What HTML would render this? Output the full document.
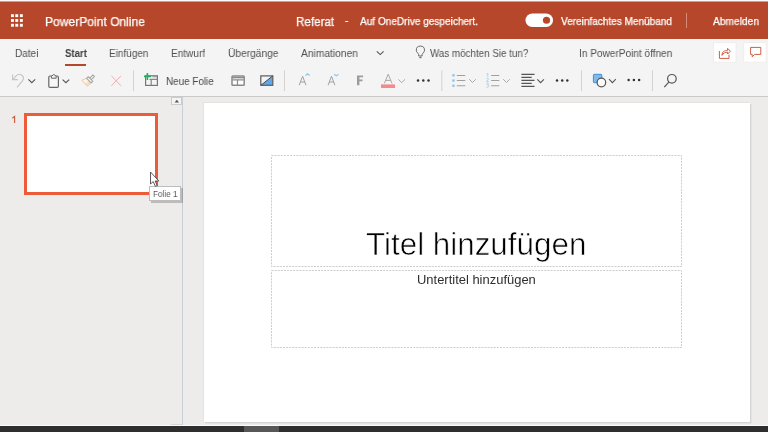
<!DOCTYPE html>
<html><head><meta charset="utf-8">
<style>
*{margin:0;padding:0;box-sizing:border-box}
html,body{width:768px;height:432px;overflow:hidden;background:#eeecea;font-family:"Liberation Sans",sans-serif}
.abs{position:absolute}
#topline{left:0;top:0;width:768px;height:1px;background:#fdfbfa;box-shadow:0 1px 0 #d8988a}
#hdr{left:0;top:2px;width:768px;height:37px;background:#b7472a}
#ribbon{left:0;top:39px;width:768px;height:57px;background:#f4f4f4}
#ribline{left:0;top:96px;width:768px;height:1px;background:#c9c9c9}
.t{position:absolute;white-space:nowrap;line-height:1;transform-origin:0 0;will-change:transform}
.w{color:#fff;-webkit-text-stroke:0.25px #fff}
.tab{color:#505050;font-size:10.5px;top:47.8px}
#left{left:0;top:97px;width:182px;height:328px;background:#eeecea}
#divider{left:182px;top:97px;width:1px;height:328px;background:#c8ced5}
#main{left:183px;top:97px;width:585px;height:328px;background:#eeecea}
#slide{left:204px;top:103px;width:546px;height:319px;background:#fff;box-shadow:1px 1px 0 #d4d4d4, 2px 2px 0 #e5e4e2, -1px -1px 0 #e4e3e1}
#whiteline{left:0;top:425px;width:768px;height:1px;background:#fafafa}
#taskbar{left:0;top:426px;width:768px;height:6px;background:#2e2e2e}
svg{position:absolute;overflow:visible}
.sep{position:absolute;width:1px;background:#d6d4d2}
.ph{position:absolute;border:1px dashed #c4c4c4}
</style></head><body>
<div id="topline" class="abs"></div>
<div id="hdr" class="abs"></div>
<!-- waffle -->
<svg style="left:0;top:0" width="768" height="40">
  <g fill="#fff"><rect x="11" y="14.2" width="2.9" height="2.9"/><rect x="15.3" y="14.2" width="2.9" height="2.9"/><rect x="19.9" y="14.2" width="2.9" height="2.9"/><rect x="11" y="19.0" width="2.9" height="2.9"/><rect x="15.3" y="19.0" width="2.9" height="2.9"/><rect x="19.9" y="19.0" width="2.9" height="2.9"/><rect x="11" y="23.8" width="2.9" height="2.9"/><rect x="15.3" y="23.8" width="2.9" height="2.9"/><rect x="19.9" y="23.8" width="2.9" height="2.9"/></g>
  <rect x="525.5" y="13.5" width="27.5" height="13.5" rx="6.75" fill="#fff"/>
  <circle cx="546.5" cy="20.25" r="3.6" fill="#b7472a"/>
  <rect x="686" y="13" width="1" height="15" fill="#d68a77"/>
</svg>
<div class="t w" style="left:45px;top:15.6px;font-size:12.5px;transform:scaleX(.966)">PowerPoint Online</div>
<div class="t w" style="left:296.3px;top:15.6px;font-size:12.5px;transform:scaleX(.93)">Referat</div>
<div class="t w" style="left:345.3px;top:14.8px;font-size:10.5px">-</div>
<div class="t w" style="left:359.5px;top:15.5px;font-size:10.5px;transform:scaleX(.958)">Auf OneDrive gespeichert.</div>
<div class="t w" style="left:561px;top:15.6px;font-size:10.5px;transform:scaleX(.955)">Vereinfachtes Menüband</div>
<div class="t w" style="left:713px;top:16px;font-size:10.5px;transform:scaleX(.973)">Abmelden</div>

<div id="ribbon" class="abs"></div>
<div class="t tab" style="left:14.5px;transform:scaleX(.955)">Datei</div>
<div class="t tab" style="left:64.6px;font-weight:bold;color:#3c3c3c;transform:scaleX(.915)">Start</div>
<div class="abs" style="left:64.5px;top:64px;width:21.5px;height:2px;background:#b7472a"></div>
<div class="t tab" style="left:108.5px;transform:scaleX(.953)">Einfügen</div>
<div class="t tab" style="left:171.2px;transform:scaleX(.958)">Entwurf</div>
<div class="t tab" style="left:227.6px;transform:scaleX(.972)">Übergänge</div>
<div class="t tab" style="left:300.6px;transform:scaleX(.975)">Animationen</div>
<div class="t tab" style="left:429.8px;transform:scaleX(.934)">Was möchten Sie tun?</div>
<div class="t tab" style="left:579px;transform:scaleX(.959)">In PowerPoint öffnen</div>
<div class="t tab" style="left:166px;top:76.2px;color:#484848;transform:scaleX(.94)">Neue Folie</div>

<svg style="left:0;top:0" width="768" height="432" viewBox="0 0 768 432">
 <g fill="none" stroke-linecap="butt" stroke-linejoin="miter">
  <!-- tab chevron -->
  <path d="M376.8 51.3 L380.2 54.6 L383.6 51.3" stroke="#555" stroke-width="1.1"/>
  <!-- bulb -->
  <path d="M418.7 56 V54.6 C418.7 53.4 416.3 52.6 416.3 50.2 A4.1 4.1 0 0 1 424.5 50.2 C424.5 52.6 422.1 53.4 422.1 54.6 V56 Z" stroke="#666" stroke-width="1"/>
  <path d="M419.4 57.6 H421.4" stroke="#666" stroke-width="1.2"/>
  <!-- undo -->
  <path d="M12.6 74.4 V79.6 H17.8" stroke="#c4c4c4" stroke-width="1.1"/>
  <path d="M13 79.3 L16.4 75.6 A4 4 0 0 1 22.6 80.6 L17 87.4" stroke="#c4c4c4" stroke-width="1.1"/>
  <path d="M28.4 79.4 L31.8 82.7 L35.2 79.4" stroke="#555" stroke-width="1.1"/>
  <!-- clipboard -->
  <rect x="48.8" y="76" width="9.6" height="11.4" rx="1.2" stroke="#666" stroke-width="1.2" fill="#f7f7f7"/>
  <path d="M51.4 78.2 V76.4 L53.8 74.4 L56.2 76.4 V78.2 Z" stroke="#666" stroke-width="1" fill="#f3f3f3"/>
  <path d="M62.6 79.6 L65.9 82.7 L69.2 79.6" stroke="#555" stroke-width="1.1"/>
  <!-- format painter -->
  <g transform="translate(89.4 80) rotate(-45)">
   <path d="M-1 -3.3 L-5.4 -5.2 L-6 2.8 L-1.3 3.4 Z" fill="#fdf3e6" stroke="#f3c394" stroke-width="0.9"/>
   <path d="M-5.2 0 L-1.3 0 L-1.3 3.4 L-6 2.8 Z" fill="#f9dcb6"/>
   <path d="M-0.8 -3.2 H1.6 V3.2 H-0.8 Z M1.6 -1.1 H6 V1.1 H1.6" fill="#f2f2f2" stroke="#a2a2a2" stroke-width="1"/>
  </g>
  <!-- delete X -->
  <path d="M111.4 75.8 L121 85.8 M121 75.8 L111.4 85.8" stroke="#f0aab2" stroke-width="1"/>
  <!-- new slide -->
  <rect x="145.6" y="75.8" width="11.8" height="9.6" stroke="#777" stroke-width="1.2" fill="#f4f4f4"/>
  <path d="M149.5 79.3 H157 M151.2 79.3 V85" stroke="#888" stroke-width="1.2"/>
  <path d="M152.5 76.7 H157" stroke="#999" stroke-width="1.2"/>
  <path d="M144 76.4 H151 M147.4 73 V80" stroke="#2bab62" stroke-width="1.6"/>
  <!-- layout -->
  <rect x="232" y="76" width="12.2" height="9.2" rx="0.8" stroke="#8a8a8a" stroke-width="1.5" fill="#fff"/>
  <path d="M232 77.6 H244.2" stroke="#8a8a8a" stroke-width="1.5"/>
  <path d="M232.5 79.8 H243.7 M237.5 79.8 V85" stroke="#8a8a8a" stroke-width="1.2"/>
  <!-- design -->
  <path d="M272.6 76 V85.2 H261.2 Z" fill="#62a8e8"/>
  <rect x="260.8" y="75.9" width="12" height="9.4" stroke="#5a5a5a" stroke-width="1.2"/>
  <path d="M261 85.2 L272.6 76" stroke="#444" stroke-width="1"/>
  <!-- grow font -->
  <path d="M299.2 85.2 L302.6 76.2 L306 85.2 M300.4 82 H304.8" stroke="#a0a0a0" stroke-width="1"/>
  <path d="M305.4 75.6 L307.6 73.8 L309.8 75.6" stroke="#8cc4ec" stroke-width="1.1"/>
  <!-- shrink font -->
  <path d="M328.1 85.2 L331.5 76.2 L334.9 85.2 M329.3 82 H333.7" stroke="#a0a0a0" stroke-width="1"/>
  <path d="M334.2 74.2 L336.3 75.9 L338.4 74.2" stroke="#8cc4ec" stroke-width="1.1"/>
  <!-- font color -->
  <path d="M384.4 83.4 L388.2 74.2 L392 83.4 M385.6 80.4 H390.8" stroke="#a8a8a8" stroke-width="1"/>
  <rect x="381" y="84.4" width="14" height="3.6" fill="#f48a8e"/>
  <path d="M398.4 79.4 L401.7 82.6 L405 79.4" stroke="#aaa" stroke-width="1"/>
  <!-- bullets -->
  <path d="M456.8 75.4 H465.3 M456.8 80.5 H465.3 M456.8 85.7 H465.3" stroke="#a0a0a0" stroke-width="1.05"/>
  <path d="M469.2 79.2 L472.5 82.5 L475.8 79.2" stroke="#aaa" stroke-width="1"/>
  <path d="M491.1 75.4 H499.3 M491.1 80.5 H499.3 M491.1 85.7 H499.3" stroke="#a0a0a0" stroke-width="1.05"/>
  <path d="M503.2 79.2 L506.5 82.5 L509.8 79.2" stroke="#aaa" stroke-width="1"/>
  <path d="M486.6 74.1 L487.8 73.4 V76.7 M486.4 78.6 Q487.3 77.8 488.2 78.3 Q488.8 79.2 486.4 81.7 H488.9 M486.4 83.7 H488.6 L487.4 85.2 Q489.1 85.3 488.7 86.6 Q488 87.7 486.3 87.2" stroke="#92c6ee" stroke-width="0.7"/>
  <!-- align -->
  <path d="M521.4 74.4 H534.5 M521.4 77.4 H531.7 M521.4 80.4 H534.5 M521.4 83.4 H531.7 M521.4 86.4 H534.5" stroke="#555" stroke-width="1.1"/>
  <path d="M537.3 79.3 L540.6 82.6 L543.9 79.3" stroke="#555" stroke-width="1.1"/>
  <!-- shapes -->
  <rect x="593.4" y="74.3" width="8.4" height="8.4" rx="0.8" fill="#82baea" stroke="#3d8fdb" stroke-width="1"/>
  <circle cx="601.4" cy="82.5" r="4.3" fill="#fafafa" stroke="#555" stroke-width="1.2"/>
  <path d="M609 79.2 L612.4 82.6 L615.8 79.2" stroke="#555" stroke-width="1.1"/>
  <!-- search -->
  <circle cx="671.9" cy="78.8" r="4.3" stroke="#555" stroke-width="1.2"/>
  <path d="M668.8 82.2 L664.3 87.2" stroke="#555" stroke-width="1.2"/>
 </g>
 <g>
  <rect x="452.3" y="74.2" width="2.3" height="2.3" fill="#8cc2ec"/>
  <rect x="452.3" y="79.4" width="2.3" height="2.3" fill="#8cc2ec"/>
  <rect x="452.3" y="84.6" width="2.3" height="2.3" fill="#8cc2ec"/>
  <circle cx="418" cy="80.6" r="1.25" fill="#333"/><circle cx="423.3" cy="80.6" r="1.25" fill="#333"/><circle cx="428.5" cy="80.6" r="1.25" fill="#333"/>
  <circle cx="557" cy="80.4" r="1.25" fill="#333"/><circle cx="562.2" cy="80.4" r="1.25" fill="#333"/><circle cx="567.3" cy="80.4" r="1.25" fill="#333"/>
  <circle cx="628.6" cy="80" r="1.25" fill="#333"/><circle cx="633.9" cy="80" r="1.25" fill="#333"/><circle cx="639.1" cy="80" r="1.25" fill="#333"/>
  <rect x="133" y="70.5" width="1" height="20.5" fill="#d4d2d0"/>
  <rect x="284" y="70.5" width="1" height="20.5" fill="#d4d2d0"/>
  <rect x="441.3" y="70.5" width="1" height="20.5" fill="#d4d2d0"/>
  <rect x="581" y="70.5" width="1" height="20.5" fill="#d4d2d0"/>
  <rect x="652" y="70.5" width="1" height="20.5" fill="#d4d2d0"/>
 </g>
 <path d="M357 75.4 H363.1 V77.3 H359.4 V79.5 H362.5 V81.3 H359.4 V85.2 H357 Z" fill="#9c9c9c"/>
 <!-- share / comment buttons -->
 <rect x="713.5" y="42.7" width="22.5" height="19.5" fill="#fff" stroke="#eeecea" stroke-width="0.8"/>
 <rect x="743.7" y="42.7" width="22.5" height="19.5" fill="#fff" stroke="#eeecea" stroke-width="0.8"/>
 <g fill="none" stroke="#cc5f45" stroke-width="1">
  <path d="M719.4 51 V58.4 H729 V54.6"/>
  <path d="M722 55.4 C722 51.6 724.4 50.4 727.6 50.4 V48.4 L730.4 51.2 L727.6 54 V52.2 C725 52.2 723.2 53.2 722 55.4 Z"/>
  <path d="M750.6 47.4 H760.8 V54.4 H754.6 L752.2 56.8 V54.4 H750.6 Z"/>
 </g>
</svg>
<div id="ribline" class="abs"></div>
<div id="left" class="abs"></div>
<div id="divider" class="abs"></div>
<div class="abs" style="left:171px;top:97px;width:11px;height:8px;background:#f4f4f4;border:1px solid #c9ccd0"></div>
<svg style="left:0;top:0" width="768" height="432"><path d="M174.6 102.4 L176.8 99.8 L179 102.4 Z" fill="#555"/></svg>
<div class="abs" style="left:171px;top:424px;width:11px;height:2px;background:#d4d6da"></div>
<svg style="left:0;top:0" width="40" height="130"><path d="M12.3 118.2 L14.6 116.4 V123" fill="none" stroke="#c8583c" stroke-width="1.1"/></svg>
<div class="abs" style="left:24px;top:113px;width:134px;height:82px;background:#fff;border:3px solid #ec5c38"></div>
<div id="main" class="abs"></div>
<div id="slide" class="abs"></div>
<svg style="left:0;top:0" width="768" height="432"><g fill="none" stroke="#cdcdcd" stroke-width="1" stroke-dasharray="2 1.1">
<rect x="271.5" y="155.5" width="410" height="111"/>
<rect x="271.5" y="270.5" width="410" height="77"/>
</g></svg>
<div class="t" style="left:366.3px;top:228.9px;font-size:31px;color:#000;-webkit-text-stroke:0.6px #fff;transform:scaleX(1.012)">Titel hinzufügen</div>
<div class="t" style="left:417px;top:273.8px;font-size:12.5px;color:#2e2e2e;transform:scaleX(1.036)">Untertitel hinzufügen</div>

<div class="abs" style="left:149px;top:186px;width:32px;height:15px;background:#fff;border:1px solid #bdbdbd;box-shadow:2px 2px 0 rgba(0,0,0,.2)"></div>
<div class="t" style="left:152.7px;top:188.7px;font-size:9.6px;color:#5a5a5a;transform:scaleX(.85)">Folie 1</div>
<svg style="left:0;top:0" width="768" height="432"><path d="M150.5 172 V184 L153.2 181.6 L155.4 186.4 L157.2 185.6 L155.2 181 L158.8 181 Z" fill="#fff" stroke="#4a4a4a" stroke-width="0.9" stroke-linejoin="miter"/></svg>
<div id="whiteline" class="abs"></div>
<div id="taskbar" class="abs"></div>
<div class="abs" style="left:244px;top:426px;width:35px;height:6px;background:#575757"></div>
</body></html>
